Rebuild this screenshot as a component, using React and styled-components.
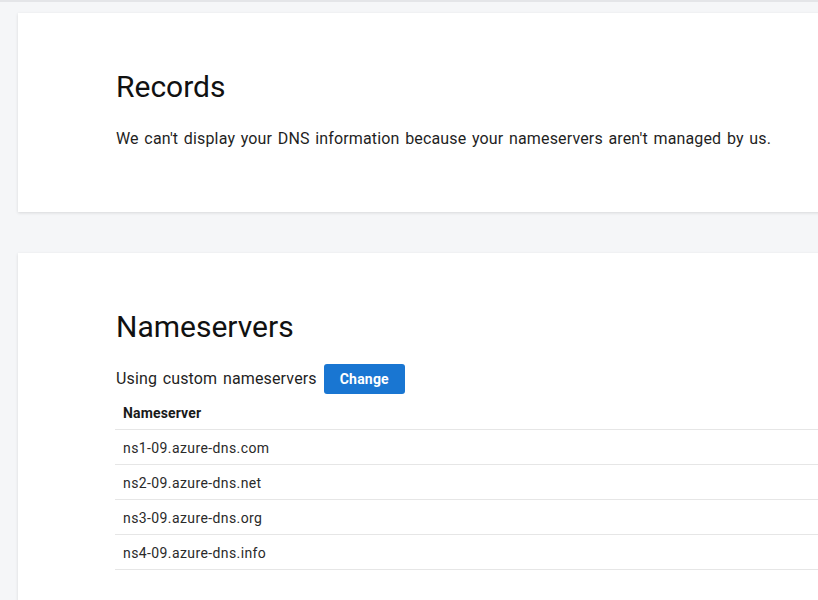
import React from "react";
import styled, { createGlobalStyle } from "styled-components";

const Global = createGlobalStyle`
  html, body { margin: 0; padding: 0; }
  body {
    background: #f5f6f8;
    font-family: "Roboto", "Inter", sans-serif;
    color: #111;
    overflow: hidden;
  }
`;

const Page = styled.div`
  border-top: 2px solid #e4e5e8;
  padding: 11px 0 0 18px;
  display: flex;
  flex-direction: column;
  gap: 41px;
  height: 600px;
  box-sizing: border-box;
`;

const Card = styled.section`
  background: #fff;
  box-shadow: 0 1px 3px rgba(0, 0, 0, 0.12);
  margin-right: -30px;
  padding: ${(p) => p.$pad};
  min-height: ${(p) => p.$minH || "auto"};
  box-sizing: border-box;
`;

const Title = styled.h2`
  margin: 0;
  font-weight: 400;
  font-size: 30px;
  line-height: 36px;
  color: #111;
`;

const Text = styled.p`
  margin: 0;
  font-size: 16px;
  line-height: 22px;
  color: #1f1f1f;
  letter-spacing: 0.15px;
  word-spacing: 1.5px;
  margin-top: ${(p) => p.$mt || "0"};
`;

const Row = styled.div`
  display: flex;
  align-items: center;
  gap: 7px;
  margin-top: 19px;
`;

const Button = styled.button`
  background: #1976d2;
  color: #fff;
  border: none;
  border-radius: 3px;
  height: 30px;
  padding: 0 16px;
  font-family: inherit;
  font-weight: 700;
  font-size: 14px;
  letter-spacing: 0.2px;
  cursor: pointer;
`;

const Table = styled.div`
  margin-top: 1px;
  margin-left: -1px;
  margin-right: 30px;
`;

const HeadCell = styled.div`
  font-weight: 700;
  font-size: 14px;
  letter-spacing: 0.15px;
  height: 35px;
  box-sizing: border-box;
  display: flex;
  align-items: center;
  padding: 1px 0 0 8px;
  border-bottom: 1px solid #e6e6e6;
  color: #1a1a1a;
`;

const Cell = styled.div`
  font-size: 14px;
  letter-spacing: 0.4px;
  height: 35px;
  box-sizing: border-box;
  display: flex;
  align-items: center;
  padding: 1px 0 0 8px;
  border-bottom: 1px solid #e6e6e6;
  color: #2a2a2a;
`;

const servers = [
  "ns1-09.azure-dns.com",
  "ns2-09.azure-dns.net",
  "ns3-09.azure-dns.org",
  "ns4-09.azure-dns.info",
];

export default function App() {
  return (
    <>
      <Global />
      <Page>
        <Card $pad="56px 0 0 98px" $minH="199px">
          <Title>Records</Title>
          <Text $mt="23px">
            We can't display your DNS information because your nameservers aren't managed by us.
          </Text>
        </Card>
        <Card $pad="56px 0 40px 98px">
          <Title>Nameservers</Title>
          <Row>
            <Text>Using custom nameservers</Text>
            <Button>Change</Button>
          </Row>
          <Table>
            <HeadCell>Nameserver</HeadCell>
            {servers.map((s) => (
              <Cell key={s}>{s}</Cell>
            ))}
          </Table>
        </Card>
      </Page>
    </>
  );
}
